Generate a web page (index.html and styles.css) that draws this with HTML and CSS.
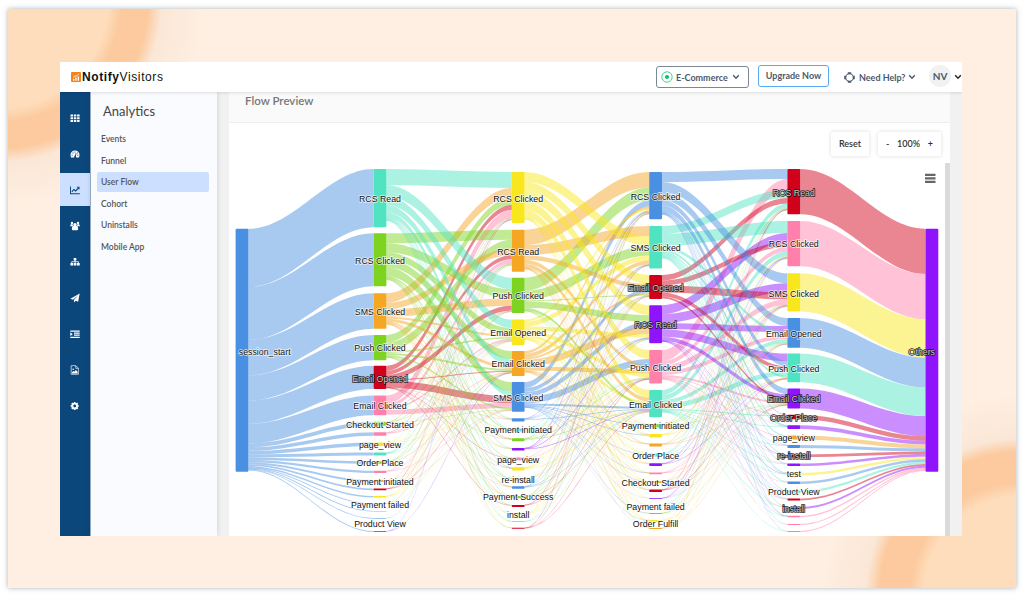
FILE: index.html
```html
<!DOCTYPE html>
<html lang="en">
<head>
    <meta charset="UTF-8">
    <meta name="viewport" content="width=device-width, initial-scale=1.0">
    <title>User Flow - NotifyVisitors</title>
    <link rel="stylesheet" href="styles.css">
</head>
<body>
    <div class="frame">
        <div class="app">
            <header class="topbar">
                <div class="logo">
                    <svg class="logo-mark" viewBox="0 0 10 10"><rect width="10" height="10" rx="1" fill="#f58220"/><path d="M2 8.8V6.8h1.3v2zM4.3 8.8V5.6h1.3v3.2zM6.7 8.8V4.4H8v4.4z" fill="#fff"/><path d="M2 5.5l2-1.7 1.2.6L8 1.7" fill="none" stroke="#fff" stroke-width=".8"/></svg>
                    <span><b>Notify</b>Visitors</span>
                </div>
                <div class="topbar-right">
                    <button class="brand-select">
                        <svg width="12" height="12" viewBox="0 0 12 12"><circle cx="6" cy="6" r="5.2" fill="none" stroke="#2fcf86" stroke-width=".9"/><circle cx="6" cy="6" r="2.1" fill="#12c06a"/></svg>
                        <span>E-Commerce</span>
                        <svg class="chevron" viewBox="0 0 8 6"><path d="M1.2 1.2L4 4.2l2.8-3"/></svg>
                    </button>
                    <button class="upgrade">Upgrade Now</button>
                    <div class="help">
                        <svg width="11" height="11" viewBox="0 0 11 11" fill="none" stroke="#4b5a6e"><circle cx="5.5" cy="5.5" r="3.8" stroke-width="1.1"/><path d="M3.8 1.1h3.4M3.8 9.9h3.4M1.1 3.8v3.4M9.9 3.8v3.4" stroke-width="1.8"/></svg>
                        <span>Need Help?</span>
                        <svg class="chevron" viewBox="0 0 8 6"><path d="M1.2 1.2L4 4.2l2.8-3"/></svg>
                    </div>
                    <div class="avatar">NV</div>
                    <svg class="chevron dark" viewBox="0 0 8 6"><path d="M1.2 1.2L4 4.2l2.8-3"/></svg>
                </div>
            </header>

            <div class="main">
                <nav class="rail">
                    <a><svg viewBox="0 0 10 10"><path d="M.5 1.5h2.5v2H.5zM3.8 1.5h2.5v2H3.8zM7.1 1.5h2.5v2H7.1zM.5 4.2h2.5v2H.5zM3.8 4.2h2.5v2H3.8zM7.1 4.2h2.5v2H7.1zM.5 6.9h2.5v2H.5zM3.8 6.9h2.5v2H3.8zM7.1 6.9h2.5v2H7.1z"/></svg></a>
                    <a><svg viewBox="0 0 10 10"><path d="M.5 6a4.5 4.5 0 0 1 9 0c0 1-.3 1.9-.7 2.4H6.2L6 6.7l.5-2.5-.7-.2-.7 2.6c-.7.1-1.1.9-.8 1.8H1.2C.8 7.9.5 7 .5 6z"/><path d="M1.6 5.7h1v1h-1zM2.5 3.5h1v1h-1zM4.5 2.4h1v1h-1zM7.4 5.7h1v1h-1zM7 3.600h.9v.9H7z" fill="#0c477c"/></svg></a>
                    <a class="active"><svg viewBox="0 0 10 10"><path d="M.4 1.5v7.200h9.400M1.800 6.800l2.100-2.300 1.700 1.400L8.600 3" fill="none" stroke="#0c477c" stroke-width="1.1"/><path d="M6.500 1.800h3v3z" fill="#0c477c"/></svg></a>
                    <a><svg viewBox="0 0 10 10"><circle cx="5" cy="3.7" r="1.7"/><circle cx="2" cy="2" r="1.2"/><circle cx="8" cy="2" r="1.2"/><path d="M.2 5.300c0-1.400.5-2 1.200-2h1.200c.1 1.100.5 1.700 1 2zM9.800 5.300c0-1.400-.5-2-1.200-2H7.400c-.1 1.100-.5 1.700-1 2zM1.900 8c0-2 .7-2.900 1.600-2.900h3c.9 0 1.600.9 1.600 2.900 0 .9-.6 1.300-1.300 1.300H3.200C2.500 9.300 1.900 8.900 1.900 8z"/></svg></a>
                    <a><svg viewBox="0 0 10 10"><path d="M3.700 1h2.600v2.400H3.700zM.4 6h2.700v2.600H.4zM3.700 6h2.700v2.600H3.700zM7 6h2.700v2.600H7z"/><path d="M5 3v3M1.700 6.200V4.700h6.700v1.500" fill="none" stroke="#fff" stroke-width=".8"/></svg></a>
                    <a><svg viewBox="0 0 10 10"><path d="M9.700.6L8.100 8.700 5.600 7.700 4.200 9.600 3.900 7 8.200 2.300 2.900 6.700.4 5.700z"/></svg></a>
                    <a><svg viewBox="0 0 10 10"><path d="M.3 1.500h9.400v1.200H.3zM4 3.600h5.700v1.200H4zM4 5.600h5.700v1.200H4zM.3 7.700h9.400v1.200H.3zM.3 3.300l2.500 1.900L.3 7.100z"/></svg></a>
                    <a><svg viewBox="0 0 10 10"><path d="M1.200.7h4.700l2.500 2.500v6.100H1.200zM5.800.8v2.600h2.500" fill="none" stroke="#d7e3ef" stroke-width=".8"/><circle cx="3.2" cy="4.2" r=".8"/><path d="M2 8.400V7.200l1.300-1.200 1 .8 1.600-1.700 1.700 1.700v1.600z"/></svg></a>
                    <a><svg viewBox="0 0 10 10"><circle cx="4.7" cy="5" r="2.4" fill="none" stroke="#fff" stroke-width="1.9"/><path d="M4.700.9v1.500M4.700 7.600v1.500M.6 5h1.500M7.300 5h1.500M1.800 2.100l1 1M6.600 6.900l1 1M7.600 2.100l-1 1M1.800 7.900l1-1" stroke="#fff" stroke-width="1.5"/></svg></a>
                </nav>

                <aside class="submenu">
                    <h2>Analytics</h2>
                    <ul>
                        <li>Events</li>
                        <li>Funnel</li>
                        <li class="selected">User Flow</li>
                        <li>Cohort</li>
                        <li>Uninstalls</li>
                        <li>Mobile App</li>
                    </ul>
                </aside>

                <section class="content">
                    <h3 class="panel-title">Flow Preview</h3>
                    <div class="panel-body">
                        <div class="toolbar">
                            <button class="tool">Reset</button>
                            <div class="tool zoom"><span>-</span><span>100%</span><span>+</span></div>
                        </div>
                        <div class="chart-area">
                            <svg id="flowChart" class="flow-chart" viewBox="229 163 716 373"></svg>
                            <div class="scroll-thumb"></div>
                        </div>
                    </div>
                </section>
            </div>
        </div>
    </div>
    <script src="flow.js"></script>
</body>
</html>
```
FILE: styles.css
```css
* {
    box-sizing: border-box;
}

body {
    margin: 0;
    padding: 9px 8px;
    height: 598px;
    background-color: #fff;
    font-family: Lato, sans-serif;
    overflow: hidden;
}

.frame {
    height: 579px;
    padding: 53px 54px 52px 52px;
    background-color: #feefe2;
    background-image:
        radial-gradient(circle at -8px -9px, #feddbc 0, #feddbc 108px, #fcca9e 122px, #fcca9e 148px, rgba(250, 230, 213, 0.9) 162px, rgba(254, 239, 226, 0) 205px),
        radial-gradient(circle at 1014px 585px, #feddbc 0, #feddbc 98px, #fcca9e 112px, #fcca9e 142px, rgba(250, 230, 213, 0.9) 156px, rgba(254, 239, 226, 0) 200px);
    box-shadow: 0 0 5px rgba(90, 100, 110, 0.5);
}

.app {
    display: flex;
    flex-direction: column;
    height: 474px;
    background-color: #f1f1f1;
    overflow: hidden;
}

/* top bar */
.topbar {
    display: flex;
    align-items: center;
    justify-content: space-between;
    flex: 0 0 30px;
    padding-left: 11px;
    background-color: #fff;
    box-shadow: 0 1px 3px rgba(0, 0, 0, 0.12);
    z-index: 1;
}

.logo {
    display: flex;
    align-items: center;
    font-family: "Liberation Sans", Arial, sans-serif;
    font-size: 12px;
    color: #111;
    letter-spacing: 0.6px;
}

.logo-mark {
    width: 10px;
    height: 10px;
    margin-right: 1px;
}

.topbar-right {
    display: flex;
    align-items: center;
    height: 30px;
    font-size: 9px;
    font-weight: bold;
    color: #4b5a6e;
}

button {
    font: inherit;
    color: inherit;
    background-color: #fff;
    border: none;
    padding: 0;
}

.chevron {
    width: 8px;
    height: 6px;
    fill: none;
    stroke: #4b5a6e;
    stroke-width: 1.4;
}

.chevron.dark {
    stroke: #222;
}

.brand-select {
    display: flex;
    align-items: center;
    width: 93px;
    height: 22px;
    margin-right: 9px;
    padding: 0 4px;
    border: 1px solid #7b8796;
    border-radius: 3px;
}

.brand-select span {
    width: 52px;
    margin: 0 4px 0 3px;
    text-align: left;
}

.upgrade {
    width: 71px;
    height: 22px;
    margin: 0 15px 3px 0;
    border: 1px solid #58aaf4;
    border-radius: 3px;
}

.help {
    display: flex;
    align-items: center;
    width: 85px;
    height: 30px;
}

.help span {
    width: 46px;
    margin: 0 3px 0 4px;
    white-space: nowrap;
}

.avatar {
    width: 22px;
    height: 22px;
    margin: 0 3px 2px 0;
    border-radius: 50%;
    background-color: #f1f1f1;
    font-size: 10px;
    line-height: 23px;
    text-align: center;
}

/* layout */
.main {
    display: flex;
    flex: 1;
    min-height: 0;
}

.rail {
    display: flex;
    flex-direction: column;
    gap: 3px;
    flex: 0 0 31px;
    padding-top: 9px;
    background-color: #0c477c;
    border-right: 1px solid #9db6cf;
}

.rail a {
    display: flex;
    align-items: center;
    justify-content: center;
    height: 33px;
}

.rail a.active {
    background-color: #cddfff;
}

.rail svg {
    width: 10px;
    height: 10px;
    fill: #fff;
}

.submenu {
    flex: 0 0 126px;
    padding: 10px 8px 0 6px;
    background-color: #f9fbff;
    box-shadow: 0 0 5px rgba(0, 0, 0, 0.16);
}

.submenu h2 {
    margin: 0 0 9px 6px;
    font-size: 13px;
    font-weight: normal;
    line-height: 18px;
    color: #444;
}

.submenu ul {
    margin: 0;
    padding: 0;
    list-style: none;
}

.submenu li {
    height: 19.5px;
    margin-bottom: 2px;
    padding-left: 4px;
    border-radius: 2px;
    font-size: 8.5px;
    font-weight: 600;
    line-height: 20px;
    color: #555;
}

.submenu li.selected {
    background-color: #cddfff;
}

/* chart panel */
.content {
    display: flex;
    flex-direction: column;
    flex: 0 0 721px;
    margin-left: 12px;
    background-color: #fff;
}

.panel-title {
    flex: 0 0 31px;
    margin: 0;
    padding-left: 16px;
    border-bottom: 1px solid #eee;
    background-color: #fafafa;
    font-size: 11.5px;
    font-weight: 600;
    line-height: 18px;
    color: #777;
}

.panel-body {
    flex: 1;
}

.toolbar {
    display: flex;
    justify-content: flex-end;
    gap: 9px;
    height: 40px;
    padding: 9px 9px 0 0;
}

.tool {
    width: 38px;
    height: 24px;
    border-radius: 2px;
    background-color: #fff;
    box-shadow: 0 0 4px rgba(0, 0, 0, 0.14);
    font-size: 9px;
    font-weight: 600;
    line-height: 24px;
    color: #333;
}

.tool.zoom {
    display: flex;
    justify-content: space-between;
    width: 63px;
    padding: 0 8px;
}

.chart-area {
    display: flex;
    height: 373px;
}

.flow-chart {
    width: 716px;
    height: 373px;
}

.scroll-thumb {
    width: 5px;
    background-color: #dadada;
}

.hairline {
    fill: none;
    stroke-width: 0.12;
}

.node-label {
    font-family: "Liberation Sans", Arial, sans-serif;
    font-size: 8.8px;
    text-anchor: middle;
    fill: #111;
    stroke: #fff;
    stroke-opacity: 0.75;
    stroke-width: 1.5px;
    paint-order: stroke;
}

.node-label.inverse {
    fill: #ccc;
    stroke: #111;
    stroke-opacity: 0.9;
    stroke-width: 1.5px;
}

.menu-icon {
    stroke: #666;
    stroke-width: 2.2;
}
```
FILE: flow.js
```js
const BLUE = '#4a90e2', TEAL = '#50e3c2', GREEN = '#7ed321', ORANGE = '#f5a623';
const RED = '#d0021b', PINK = '#ff80ab', YELLOW = '#f8e71c', PURPLE = '#9013fe';

const NODE_WIDTH = 12.8;
const COLUMN_X = [235.6, 373.6, 511.8, 649.2, 787.4, 925.5];

// each node: [top, height, color, label, label y]
const columns = [
    [[228.8, 243, BLUE, 'session_start', 351.5]],
    [
        [169, 58.2, TEAL, 'RCS Read', 198.7], [233.3, 53, GREEN, 'RCS Clicked', 260.5],
        [293.3, 35.4, ORANGE, 'SMS Clicked', 311.6], [335, 25.2, GREEN, 'Push Clicked', 348.3],
        [365.8, 23.2, RED, 'Email Opened', 378.5], [395.6, 19.6, PINK, 'Email Clicked', 406.4],
        [421.8, 4, GREEN, 'Checkout Started', 424.6], [432.2, 3.6, PINK],
        [442.5, 3.5, YELLOW, 'page_view', 445], [452.5, 3, TEAL],
        [461.3, 2.5, GREEN, 'Order Place', 463.2], [470.8, 2.2, PINK],
        [480, 2, ORANGE, 'Payment initiated', 481.5], [488.5, 1.8, RED],
        [495.9, 1.6, YELLOW], [503.5, 0.8, GREEN, 'Payment failed', 504.8], [511, 0.6, ORANGE],
        [518, 0.6, BLUE, 'Product View', 524.4], [531.2, 0.8, PURPLE]
    ],
    [
        [172, 51, YELLOW, 'RCS Clicked', 198.7], [229.7, 42, ORANGE, 'RCS Read', 251.7],
        [277.8, 35.2, GREEN, 'Push Clicked', 296], [319.6, 25.3, YELLOW, 'Email Opened', 333.4],
        [351, 25, ORANGE, 'Email Clicked', 364], [382.1, 29.6, BLUE, 'SMS Clicked', 398.2],
        [418.2, 3.2, BLUE], [428.5, 3, TEAL, 'Payment initiated', 430.4],
        [438.2, 3, GREEN], [447.9, 2.7, PURPLE], [457.5, 2.7, PINK, 'page_view', 459.6],
        [467.2, 3.2, YELLOW], [478, 2.4, ORANGE, 're-install', 479.6],
        [486.3, 2.5, BLUE], [496, 2.3, GREEN, 'Payment Success', 497.4],
        [504.9, 2, RED], [513.5, 1, YELLOW, 'install', 515.2], [521.2, 0.8, TEAL], [527.8, 1, RED]
    ],
    [
        [172, 47.3, BLUE, 'RCS Clicked', 197], [226, 42.5, TEAL, 'SMS Clicked', 248],
        [275, 24, RED, 'Email Opened', 288], [305.2, 38, PURPLE, 'RCS Read', 325],
        [350, 33.5, PINK, 'Push Clicked', 368], [390, 27.3, TEAL, 'Email Clicked', 404.7],
        [424, 3.5, GREEN, 'Payment initiated', 426.2], [434, 3.5, YELLOW],
        [443.6, 3, ORANGE], [453.6, 3, TEAL, 'Order Place', 455.7], [463.2, 2.7, PURPLE],
        [472.5, 1.7, PINK], [481, 2, ORANGE, 'Checkout Started', 482.8], [489.5, 2.5, RED],
        [498, 0.8, PURPLE], [505, 0.8, TEAL, 'Payment failed', 507.4], [513, 1, GREEN],
        [520, 2, YELLOW, 'Order Fulfill', 524.4], [527.9, 1.2, ORANGE]
    ],
    [
        [169, 45.2, RED, 'RCS Read', 192.6], [221, 45.3, PINK, 'RCS Clicked', 244.2],
        [273.3, 38.3, YELLOW, 'SMS Clicked', 293.5], [318, 29.8, BLUE, 'Email Opened', 333.8],
        [353.5, 28.7, TEAL, 'Push Clicked', 368.5], [388.4, 20.2, PURPLE, 'Email Clicked', 399.3],
        [414.8, 4.5, RED, 'Order Place', 417.7], [425.3, 3.7, PURPLE],
        [435.5, 4, ORANGE, 'page_view', 438], [445, 3, BLUE],
        [454.5, 2.7, RED, 're-install', 456.4], [463.5, 2.6, PURPLE],
        [473, 2.5, YELLOW, 'test', 474.4], [481.5, 2.4, BLUE],
        [490.5, 2.2, TEAL, 'Product View', 492.2], [498.5, 1.9, RED],
        [507, 2, PURPLE, 'install', 509.3], [515.8, 1.5, PINK],
        [524.1, 0.9, PINK], [531.1, 0.8, PINK]
    ],
    [[228.8, 243, PURPLE, 'Others', 351.5]]
];

// main flows between neighbouring columns: for each target, [source index, width]
const mainFlows = {
    1: [
        [[0, 16], [2, 9.5], [3, 7.5], [4, 5], [5, 8.5]],
        [[1, 10], [3, 9], [2, 6.5], [4, 4], [5, 3.5]],
        [[0, 11.5], [1, 9], [2, 7.5], [4, 4.8], [5, 0.6]],
        [[0, 8.5], [1, 7], [2, 2], [3, 1.5], [5, 1.5]],
        [[1, 8], [0, 7], [2, 3], [3, 2], [4, 0.8]],
        [[1, 9], [0, 5], [4, 7], [5, 5], [3, 1.5]]
    ],
    2: [
        [[1, 15.5], [2, 13], [5, 6], [4, 2.5], [3, 2]],
        [[1, 10], [0, 10], [2, 9.5], [3, 5], [4, 4]],
        [[0, 9], [1, 4.5], [5, 4], [4, 2], [2, 1]],
        [[0, 10], [2, 6.5], [5, 5], [4, 7], [3, 4]],
        [[0, 9], [5, 6.5], [1, 4], [4, 4], [3, 4]],
        [[0, 7.5], [1, 4], [3, 3], [2, 2.5], [5, 2]]
    ],
    3: [
        [[0, 10], [4, 11], [1, 8], [2, 5.5], [5, 5]],
        [[1, 12], [3, 9], [2, 5], [4, 4.5], [5, 5]],
        [[0, 10], [3, 9], [2, 7], [4, 5.5]],
        [[0, 8], [3, 6], [1, 3], [4, 4], [5, 4]],
        [[3, 7.5], [0, 5.5], [2, 4], [5, 5], [1, 2.5]],
        [[0, 6], [3, 4], [2, 2], [1, 1.5], [4, 2]]
    ]
};

const chart = document.getElementById('flowChart');

function addShape(name, attrs, text) {
    const el = document.createElementNS('http://www.w3.org/2000/svg', name);
    for (const key in attrs) {
        el.setAttribute(key, attrs[key]);
    }
    if (text) {
        el.textContent = text;
    }
    chart.appendChild(el);
}

// Build the links from column c to column c + 1
function buildLinks(c) {
    const sources = columns[c];
    const targets = columns[c + 1];
    if (sources.length === 1) {
        return targets.map((node, i) => ({ from: 0, to: i, width: node[1] }));
    }
    if (targets.length === 1) {
        return sources.map((node, i) => ({ from: i, to: 0, width: node[1] }));
    }

    const links = [];
    const outLeft = sources.map(node => node[1]);
    const inLeft = targets.map(node => node[1]);
    mainFlows[c].forEach((flows, to) => {
        flows.forEach(([from, width]) => {
            links.push({ from, to, width });
            outLeft[from] -= width;
            inLeft[to] -= width;
        });
    });

    // the rest of every node is spread over the thin links
    const total = Math.max(outLeft.reduce((a, b) => a + b), inLeft.reduce((a, b) => a + b));
    targets.forEach((target, to) => {
        sources.forEach((source, from) => {
            const width = outLeft[from] * inLeft[to] / total;
            const oneSmall = (from > 5) !== (to > 5);
            if (oneSmall && width > 0.05 && (from * 3 + to * 2) % 5 > 1) {
                links.push({ from, to, width: width * 1.2 });
            }
        });
    });
    return links;
}

function drawLinks(c) {
    const links = buildLinks(c);
    const outY = columns[c].map(node => node[0]);
    const inY = columns[c + 1].map(node => node[0]);

    // outgoing links leave a node in the order of their targets
    links.slice().sort((a, b) => a.to - b.to).forEach(link => {
        link.y1 = outY[link.from];
        outY[link.from] += link.width;
    });
    links.forEach(link => {
        link.y2 = inY[link.to];
        inY[link.to] += link.width;
    });

    const x1 = COLUMN_X[c] + NODE_WIDTH;
    const x2 = COLUMN_X[c + 1];
    const bend = 46;
    links.forEach(({ from, y1, y2, width }) => {
        const fill = columns[c][from][2];
        const top = `M${x1} ${y1}C${x1 + bend} ${y1} ${x2 - bend} ${y2} ${x2} ${y2}`;
        const bottom = `V${y2 + width}C${x2 - bend} ${y2 + width} ${x1 + bend} ${y1 + width} ${x1} ${y1 + width}Z`;
        addShape('path', { d: top + bottom, fill, 'fill-opacity': 0.48 });
        // keep the thinnest flows visible
        if (width < 1) {
            addShape('path', { d: top, class: 'hairline', stroke: fill });
        }
    });
}

for (let c = 0; c < columns.length - 1; c++) {
    drawLinks(c);
}

columns.forEach((nodes, c) => {
    nodes.forEach(([y, height, fill]) => {
        addShape('rect', { x: COLUMN_X[c], y, width: NODE_WIDTH, height, fill, rx: Math.min(1, height / 3) });
    });
});

columns.forEach((nodes, c) => {
    nodes.forEach(([, , fill, label, y]) => {
        if (!label) return;
        let x = COLUMN_X[c] + NODE_WIDTH / 2;
        if (c === 0) x = 264.7;
        if (c === 5) x = 921.8;
        const dark = fill === RED || fill === PURPLE;
        addShape('text', { x, y: y + 3, class: dark ? 'node-label inverse' : 'node-label' }, label);
    });
});

addShape('path', { d: 'M925 174.8h10.5M925 178.300h10.5M925 181.800h10.5', class: 'menu-icon' });
```
